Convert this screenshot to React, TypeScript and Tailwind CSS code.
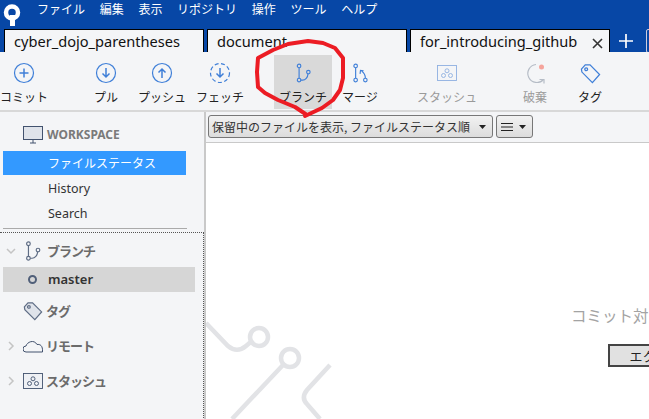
const jp = 'font-["Noto_Sans_CJK_JP","Noto_Sans",sans-serif]'

const menus = ['ファイル', '編集', '表示', 'リポジトリ', '操作', 'ツール', 'ヘルプ']

function Logo() {
  return (
    <svg width="18" height="24" viewBox="0 0 18 24" className="ml-[3px] mt-[3px] shrink-0">
      <circle cx="9" cy="9.5" r="6" fill="none" stroke="#fff" strokeWidth="4.5" />
      <rect x="7" y="12" width="5" height="11" fill="#fff" />
    </svg>
  )
}

function Tab({ label, active, w }: { label: string; active?: boolean; w: string }) {
  return (
    <div
      className={`${w} h-[24px] shrink-0 border border-black px-[9px] text-[14.6px] leading-[22px] text-[#111] flex justify-between font-["Noto_Sans",sans-serif] bg-[#f4f5f7] ${
        active ? 'border-b-0' : ''
      }`}
    >
      <span>{label}</span>
      {active && (
        <svg width="13" height="13" viewBox="0 0 13 13" className="mt-[7px] -mr-[4px]">
          <path d="M2 2l9 9M11 2l-9 9" stroke="#333" strokeWidth="1.6" />
        </svg>
      )}
    </div>
  )
}

function ToolItem({ label, w, ml, muted, active, children }: { label: string; w: string; ml: string; muted?: boolean; active?: boolean; children: React.ReactNode }) {
  return (
    <div className={`${w} ${ml} h-[54px] shrink-0 flex flex-col items-center ${active ? 'bg-[#d9d9d9]' : ''}`}>
      <div className="h-[32px] mt-[2px] flex items-center justify-center">{children}</div>
      <span className={`whitespace-nowrap text-[12px] leading-[18px] -mt-[1px] ${muted ? 'text-[#9a9a9a]' : 'text-[#222]'}`}>{label}</span>
    </div>
  )
}

function CircleIcon({ d, dashed }: { d: string; dashed?: boolean }) {
  return (
    <svg width="22" height="22" viewBox="0 0 22 22" fill="none" stroke="#3f7fd8">
      <circle cx="11" cy="11" r="9.5" strokeWidth="1.2" strokeDasharray={dashed ? '4 2.5' : undefined} />
      <path d={d} strokeWidth="1.5" />
    </svg>
  )
}

function BranchIcon({ color, w = 15, h = 20 }: { color: string; w?: number; h?: number }) {
  return (
    <svg width={w} height={h} viewBox="0 0 17 22" fill="none" stroke={color} strokeWidth="1.3">
      <circle cx="3.5" cy="3" r="2" />
      <circle cx="3.5" cy="19" r="2" />
      <circle cx="14" cy="10" r="2" />
      <path d="M3.5 5v12M5.500 19h2c3 0 6-3 6-7" />
    </svg>
  )
}

function StashIcon({ color, w, h, fill }: { color: string; w: number; h: number; fill?: string }) {
  return (
    <svg width={w} height={h} viewBox="0 0 20 16" fill={fill ?? 'none'} stroke={color} strokeWidth="0.9">
      <rect x="0.5" y="0.5" width="19" height="15" />
      <circle cx="10" cy="5.8" r="2" />
      <circle cx="6.5" cy="10.5" r="2" />
      <circle cx="13.5" cy="10.5" r="2" />
    </svg>
  )
}

function TagIcon({ color, fill, size }: { color: string; fill: string; size: number }) {
  return (
    <svg width={size} height={size} viewBox="0 0 22 22" fill={fill} stroke={color} strokeWidth="1.3">
      <path d="M1.5 6.5L5.5 2h5l10 10-7.5 8.500L2 9.500z" />
      <circle cx="6.500" cy="6.500" r="1.500" fill="none" />
    </svg>
  )
}

function Chevron({ down }: { down?: boolean }) {
  return (
    <svg width="10" height="10" viewBox="0 0 10 10" fill="none" stroke="#c4c4c4" strokeWidth="1.5" className="shrink-0">
      <path d={down ? 'M1 3l4 4 4-4' : 'M3 1l4 4-4 4'} />
    </svg>
  )
}

function Caret() {
  return (
    <svg width="7" height="4" viewBox="0 0 7 4" className="ml-auto mr-[6px] shrink-0">
      <path d="M0 0h7L3.500 4z" fill="#222" />
    </svg>
  )
}

function SideHead({ label, chevron, down, gap, h = 'h-[35px]', children }: { label: string; chevron?: boolean; down?: boolean; gap: string; h?: string; children: React.ReactNode }) {
  return (
    <div className={`${h} flex items-center pl-[6px]`}>
      <div className="w-[16px] shrink-0">{chevron && <Chevron down={down} />}</div>
      <div className="w-[22px] flex justify-center shrink-0">{children}</div>
      <span className={`${gap} text-[13px] font-bold text-[#6b6b6b] tracking-[-1px]`}>{label}</span>
    </div>
  )
}

export default function App() {
  return (
    <div className={`relative w-[649px] h-[419px] overflow-hidden bg-white flex flex-col ${jp}`}>
      <div className="h-[52px] shrink-0 bg-[#0747a6]">
        <div className="h-[29px] flex items-start overflow-hidden">
          <Logo />
          <div className="flex gap-[14.7px] ml-[16px] text-[12px] leading-[17px] text-white whitespace-nowrap">
            {menus.map(m => <span key={m}>{m}</span>)}
          </div>
        </div>
        <div className="flex gap-[3px] pl-[4px] items-start overflow-hidden">
          <Tab label="cyber_dojo_parentheses" w="w-[200px]" />
          <Tab label="document" w="w-[200px]" />
          <Tab label="for_introducing_github" w="w-[200px]" active />
          <svg width="18" height="18" viewBox="0 0 18 18" className="shrink-0 ml-[4px] mt-[3px]">
            <path d="M9 2v14M2 9h14" stroke="#fff" strokeWidth="1.7" />
          </svg>
          <div className="w-[20px] h-[24px] shrink-0 ml-[8px] border border-[#ccd] rounded-[2px]" />
        </div>
      </div>

      <div className="h-[60px] shrink-0 bg-[#f4f5f7] border-b-2 border-[#d8d8d8] flex items-start pt-[3px]">
        <ToolItem label="コミット" w="w-[48px]" ml="ml-0"><CircleIcon d="M11 6.500v9M6.500 11h9" /></ToolItem>
        <ToolItem label="プル" w="w-[48px]" ml="ml-[34px]"><CircleIcon d="M11 6v9M7.500 11.500L11 15l3.500-3.500" /></ToolItem>
        <ToolItem label="プッシュ" w="w-[56px]" ml="ml-[4px]"><CircleIcon d="M11 16V7M7.500 10.500L11 7l3.500 3.500" /></ToolItem>
        <ToolItem label="フェッチ" w="w-[56px]" ml="ml-[2px]"><CircleIcon d="M11 6v9M7.500 11.500L11 15l3.500-3.500" dashed /></ToolItem>
        <ToolItem label="ブランチ" w="w-[58px]" ml="ml-[26px]" active><BranchIcon color="#3f7fd8" /></ToolItem>
        <ToolItem label="マージ" w="w-[48px]" ml="ml-[4px]">
          <svg width="15" height="20" viewBox="0 0 17 22" fill="none" stroke="#3f7fd8" strokeWidth="1.3">
            <circle cx="3" cy="3" r="2" />
            <circle cx="3" cy="19" r="2" />
            <circle cx="14" cy="19" r="2" />
            <path d="M3 5v12M14 17c0-4-1-6-4-8M8 12l.5-4 3.500 .5" />
          </svg>
        </ToolItem>
        <ToolItem label="スタッシュ" w="w-[70px]" ml="ml-[28px]" muted><StashIcon color="#8fb0e0" w={20} h={16} /></ToolItem>
        <ToolItem label="破棄" w="w-[40px]" ml="ml-[33px]" muted>
          <svg width="22" height="22" viewBox="0 0 22 22" fill="none">
            <path d="M12 2.500a9 9 0 1 0 7.500 15" stroke="#b5bcc6" strokeWidth="1.2" />
            <path d="M15.500 17.500h4.500v4" stroke="#b5bcc6" strokeWidth="1.2" />
            <circle cx="17.500" cy="5" r="2.500" fill="#f5a49c" />
          </svg>
        </ToolItem>
        <ToolItem label="タグ" w="w-[40px]" ml="ml-[15px]"><TagIcon color="#3f7fd8" fill="none" size={21} /></ToolItem>
      </div>

      <div className="flex-1 flex min-h-0">
        <div className="w-[206px] shrink-0 bg-[#f4f5f7] border-r-2 border-[#c9c9c9]">
          <div className="h-[39px] flex items-center pl-[23px] pt-[6px]">
            <svg width="20" height="18" viewBox="0 0 20 18" fill="#dfe3ea" stroke="#42526e" strokeWidth="1">
              <rect x="0.500" y="0.500" width="19" height="13" />
              <path d="M7 17h6M10 14v3" fill="none" />
            </svg>
            <span className="ml-[4px] text-[12px] font-bold text-[#7a7a7a] font-['Noto_Sans',sans-serif]">WORKSPACE</span>
          </div>
          <div className="h-[24px] mx-[3px] w-[183px] bg-[#3399ff] pl-[45px] text-[12px] leading-[24px] text-white">ファイルステータス</div>
          <div className="h-[25px] pl-[48px] text-[12.500px] leading-[27px] text-[#333] font-['Noto_Sans',sans-serif]">History</div>
          <div className="h-[25px] pl-[48px] text-[12.500px] leading-[27px] text-[#333] font-['Noto_Sans',sans-serif]">Search</div>
          <div className="mx-[3px] w-[184px] mt-[3px] border-t border-[#aaa]" />
          <div className="mt-[3px] h-[190px] w-[204px] border-t border-r border-dotted border-[#555]">
            <SideHead label="ブランチ" chevron down gap="ml-[3px]" h="h-[34px] pt-[2px]"><BranchIcon color="#5e6c84" w={16} h={20} /></SideHead>
            <div className="h-[25px] mx-[3px] w-[192px] bg-[#d6d6d6] flex items-center pl-[25px]">
              <span className="w-[9px] h-[9px] rounded-full border-2 border-[#505f79]" />
              <span className="ml-[11px] text-[13px] font-semibold text-[#333] font-['Noto_Sans',sans-serif]">master</span>
            </div>
            <div className="h-[1px]" />
            <SideHead label="タグ" gap="ml-[2px]"><TagIcon color="#5e6c84" fill="#dfe3ea" size={20} /></SideHead>
            <SideHead label="リモート" chevron gap="ml-[2px]">
              <svg width="20" height="14" viewBox="0 0 20 14" fill="none" stroke="#42526e" strokeWidth="1">
                <path d="M4 13H3a2.500 2.500 0 0 1 0-6c1-4 8-7 11-1.500 3-.5 6 1 5.500 7.500z" />
              </svg>
            </SideHead>
            <SideHead label="スタッシュ" chevron gap="ml-[2px]"><StashIcon color="#42526e" w={20} h={16} fill="#eef0f4" /></SideHead>
          </div>
        </div>

        <div className="flex-1 min-w-0 flex flex-col">
          <div className="h-[31px] shrink-0 bg-[#f4f5f7] border-b border-[#c9c9c9] flex gap-[3px] pl-[2px] pt-[3px]">
            <div className="w-[285px] h-[23px] shrink-0 rounded-[3px] border border-[#777] bg-gradient-to-b from-[#f2f2f2] to-[#dcdcdc] flex items-center pl-[3px] whitespace-nowrap text-[12px] text-[#333]">
              保留中のファイルを表示, ファイルステータス順
              <Caret />
            </div>
            <div className="w-[37px] h-[23px] shrink-0 rounded-[3px] border border-[#777] bg-gradient-to-b from-[#f2f2f2] to-[#dcdcdc] flex items-center pl-[4px]">
              <svg width="12" height="10" viewBox="0 0 12 10" stroke="#222"><path d="M0 1.500h12M0 5h12M0 8.500h12" /></svg>
              <Caret />
            </div>
          </div>
          <div className="relative flex-1 overflow-hidden pl-[365px] whitespace-nowrap">
            <svg width="330" height="140" viewBox="0 0 330 140" fill="none" stroke="#e2e3e6" strokeWidth="4.500" className="absolute left-0 bottom-0">
              <path d="M0 44l22 23c6 5 12 5 18 0l7-6" />
              <circle cx="53" cy="58" r="9" />
              <circle cx="84" cy="79" r="9" />
              <path d="M77 86L26 140" />
              <path d="M124 86l-23 25c-4 5-4 10 0 14l13 15" />
            </svg>
            <div className="relative mt-[161px] text-[15.500px] leading-[22px] text-[#a3a3a3]">コミット対象のファイルがありません</div>
            <div className="relative mt-[18px] ml-[37px] w-[185px] h-[23px] border-2 border-[#444] bg-[#e1e1e1] text-[13px] leading-[19px] text-center text-[#222]">エクスプローラーで開く</div>
          </div>
        </div>
      </div>

      <svg width="649" height="419" viewBox="0 0 649 419" fill="none" className="absolute left-0 top-0 pointer-events-none">
        <path d="M307 115L295 107L278 100L265 93L258 87L257 72L258 58L273 50L288 44L308 41L323 43L335 48L343 58L343 78L340 90L333 100L322 108L305 116" stroke="#ec1c24" strokeWidth="4" strokeLinecap="round" strokeLinejoin="round" />
      </svg>
    </div>
  )
}
